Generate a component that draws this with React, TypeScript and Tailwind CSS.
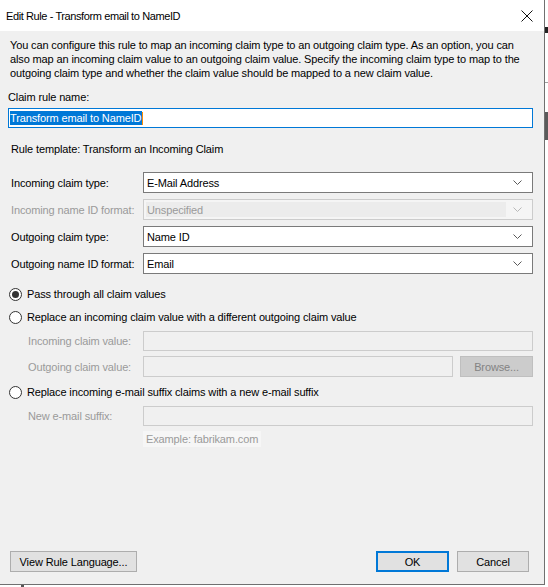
import React from "react";

const FONT = { fontFamily: '"Liberation Sans", Arial, sans-serif' };

function Chevron({ disabled }: { disabled?: boolean }) {
  return (
    <svg width="9" height="5" viewBox="0 0 9 5" className="shrink-0">
      <path d="M0.5 0.5 L4.5 4.5 L8.5 0.5" fill="none" stroke={disabled ? "#b8b8b8" : "#5a5a5a"} strokeWidth="1" />
    </svg>
  );
}

function Combo({ value, disabled }: { value: string; disabled?: boolean }) {
  if (disabled) {
    return (
      <div className="flex items-center h-[21px] w-[390px] border border-[#cccccc] bg-[#f5f5f5] pl-[2px] pr-[10px]">
        <div className="flex-1 h-[15px] bg-[#ececec] flex items-center pl-[1px] text-[#9a9a9a]">{value}</div>
        <div className="w-[16px] flex justify-end">
          <Chevron disabled />
        </div>
      </div>
    );
  }
  return (
    <div className="flex items-center justify-between h-[21px] w-[390px] border border-[#7a7a7a] bg-white pl-[3px] pr-[10px]">
      <span className="text-black">{value}</span>
      <Chevron />
    </div>
  );
}

function Radio({ checked, label }: { checked?: boolean; label: string }) {
  return (
    <div className="flex items-center h-[16px] pl-[9px]">
      <div className="w-[13px] h-[13px] rounded-full border border-[#333333] bg-white flex items-center justify-center">
        {checked && <div className="w-[7px] h-[7px] rounded-full bg-[#333333]" />}
      </div>
      <span className="ml-[5px] text-black">{label}</span>
    </div>
  );
}

function DisabledField({ label }: { label: string }) {
  return (
    <div className="flex items-center">
      <span className="w-[143px] pl-[28px] text-[#9a9a9a]">{label}</span>
      <div className="w-[390px] h-[20px] border border-[#cccccc] bg-[#f0f0f0]" />
    </div>
  );
}

export default function App() {
  return (
    <div
      className="relative w-[548px] h-[587px] bg-white overflow-hidden text-[11px] leading-[14px] tracking-[-0.13px]"
      style={FONT}
    >
      {/* bits of the window behind */}
      <div className="absolute left-[545px] top-[27px] w-[3px] h-[6px] bg-[#222222]" />
      <div className="absolute left-[545px] top-[82px] w-[3px] h-[1px] bg-[#a0a0a0]" />
      <div className="absolute left-[545px] top-[112px] w-[3px] h-[28px] bg-[#5a5a5a]" />
      <div className="absolute left-[21px] top-[585px] w-[3px] h-[2px] bg-[#555555]" />

      <div className="w-[545px] h-[585px] bg-[#f0f0f0] border-r border-b border-[#707070] flex flex-col">
        {/* title bar */}
        <div className="h-[31px] bg-white flex items-center justify-between pl-[6px] pr-[11px] shrink-0">
          <span className="text-[11px] tracking-[-0.4px] text-black">Edit Rule - Transform email to NameID</span>
          <svg width="12" height="12" viewBox="0 0 12 12">
            <path d="M0.5 0.5 L11.5 11.5 M11.5 0.5 L0.5 11.5" stroke="#111111" strokeWidth="1" />
          </svg>
        </div>

        <p className="mt-[7px] pl-[10px] text-black">
          You can configure this rule to map an incoming claim type to an outgoing claim type. As an option, you can
          <br />
          also map an incoming claim value to an outgoing claim value. Specify the incoming claim type to map to the
          <br />
          outgoing claim type and whether the claim value should be mapped to a new claim value.
        </p>

        <div className="mt-[10px] pl-[8px] text-black">Claim rule name:</div>
        <div className="mt-[4px] ml-[8px] w-[525px] h-[20px] border border-[#0078d7] bg-white flex items-center pl-[1px]">
          <span className="bg-[#0078d7] text-white pr-[1px]">Transform email to NameID</span>
          <span className="w-[1px] h-[13px] bg-[#ff8c00]" />
        </div>

        <div className="mt-[14px] pl-[11px] text-black">Rule template: Transform an Incoming Claim</div>

        <div className="mt-[16px] flex flex-col gap-[6px]">
          <div className="flex items-center">
            <span className="w-[143px] pl-[11px] text-black">Incoming claim type:</span>
            <Combo value="E-Mail Address" />
          </div>
          <div className="flex items-center">
            <span className="w-[143px] pl-[11px] text-[#9a9a9a]">Incoming name ID format:</span>
            <Combo value="Unspecified" disabled />
          </div>
          <div className="flex items-center">
            <span className="w-[143px] pl-[11px] text-black">Outgoing claim type:</span>
            <Combo value="Name ID" />
          </div>
          <div className="flex items-center">
            <span className="w-[143px] pl-[11px] text-black">Outgoing name ID format:</span>
            <Combo value="Email" />
          </div>
        </div>

        <div className="mt-[12px]">
          <Radio checked label="Pass through all claim values" />
        </div>
        <div className="mt-[7px]">
          <Radio label="Replace an incoming claim value with a different outgoing claim value" />
        </div>
        <div className="mt-[6px]">
          <DisabledField label="Incoming claim value:" />
        </div>
        <div className="mt-[5px] flex items-center">
          <span className="w-[143px] pl-[28px] text-[#9a9a9a]">Outgoing claim value:</span>
          <div className="w-[310px] h-[21px] border border-[#cccccc] bg-[#f0f0f0]" />
          <div className="ml-[7px] w-[73px] h-[21px] border border-[#bfbfbf] bg-[#cccccc] flex items-center justify-center text-[#838383]">
            Browse...
          </div>
        </div>
        <div className="mt-[7px]">
          <Radio label="Replace incoming e-mail suffix claims with a new e-mail suffix" />
        </div>
        <div className="mt-[6px]">
          <DisabledField label="New e-mail suffix:" />
        </div>
        <div className="mt-[5px] ml-[143px] self-start h-[16px] px-[3px] bg-[#f6f6f6] flex items-center text-[#9a9a9a]">
          Example: fabrikam.com
        </div>

        <div className="flex-1" />

        <div className="mb-[12px] flex items-center pl-[10px] pr-[15px]">
          <div className="w-[127px] h-[21px] border border-[#adadad] bg-[#e1e1e1] flex items-center justify-center text-black">
            View Rule Language...
          </div>
          <div className="flex-1" />
          <div className="w-[73px] h-[21px] border-2 border-[#0078d7] bg-[#e1e1e1] flex items-center justify-center text-black">
            OK
          </div>
          <div className="ml-[8px] w-[72px] h-[21px] border border-[#adadad] bg-[#e1e1e1] flex items-center justify-center text-black">
            Cancel
          </div>
        </div>
      </div>
    </div>
  );
}
